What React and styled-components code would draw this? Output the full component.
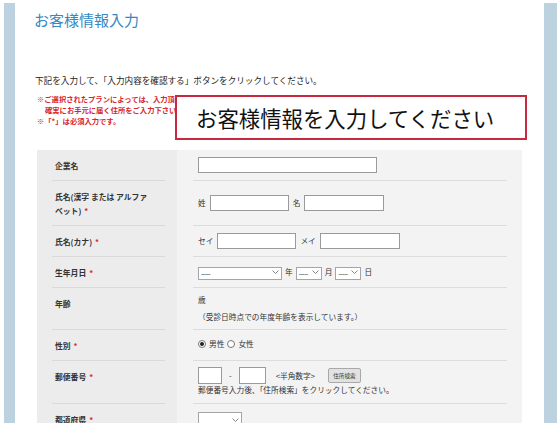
import styled, { createGlobalStyle } from 'styled-components';

const GlobalStyle = createGlobalStyle`
  html, body {
    margin: 0;
    padding: 0;
    background: #fff;
    overflow: hidden;
  }
  body {
    font-family: "Noto Sans CJK JP", "Noto Sans", sans-serif;
    color: #333;
  }
`;

const Page = styled.div`
  position: relative;
  display: flex;
  width: 557px;
  height: 423px;
  overflow: hidden;
`;

const SideBar = styled.div`
  flex: none;
  width: ${props => props.w}px;
  margin-left: ${props => props.ml || 0}px;
  margin-top: 3px;
  background: #bdd2df;
`;

const Main = styled.main`
  flex: none;
  width: 529px;
  display: flex;
  flex-direction: column;
`;

const Title = styled.h1`
  margin: 0;
  padding: 10px 0 0 19px;
  font-size: 15px;
  line-height: 20px;
  font-weight: normal;
  color: #3489c3;
`;

const Divider = styled.div`
  margin: 13px 5px 0 14px;
  height: 3px;
  background: linear-gradient(to right, rgba(220, 220, 220, 0.3), #e9e9e9 8%, #ececec 85%, rgba(236, 236, 236, 0));
  box-shadow: 0 2px 3px rgba(0, 0, 0, 0.03);
`;

const Lead = styled.p`
  margin: 31px 0 0 20px;
  font-size: 8.6px;
  line-height: 12px;
  color: #222;
`;

const Notes = styled.div`
  margin: 8px 0 0 22px;
  font-size: 7.3px;
  line-height: 11px;
  font-weight: bold;
  color: #d8262e;
`;

const NoteLine = styled.div`
  padding-left: ${props => (props.indent ? 8 : 0)}px;
  white-space: nowrap;
`;

const Form = styled.div`
  margin: 23px 0 0 22px;
  width: 485px;
  background: #f3f3f3;
`;

const Row = styled.div`
  display: grid;
  grid-template-columns: 140px 1fr;
`;

const LabelCell = styled.div`
  background: #ececec;
  padding: 0 12px 0 15px;
`;

const LabelInner = styled.div`
  height: 100%;
  box-sizing: border-box;
  padding: 9px 12px 7px 3px;
  border-bottom: 1px solid #d9d9d9;
  font-size: 7.8px;
  line-height: 14px;
  font-weight: bold;
  color: #333;
`;

const LabelText = styled.span`
  display: inline;
`;

const Required = styled.span`
  color: #d8262e;
  margin-left: 3px;
`;

const ValueCell = styled.div`
  padding: 0 15px 0 16px;
`;

const ValueInner = styled.div`
  height: 100%;
  box-sizing: border-box;
  padding: ${props => props.pad || '7px 5px'};
  border-bottom: 1px solid #dcdcdc;
  font-size: 7.7px;
  line-height: ${props => props.lh || 14}px;
  color: #333;
`;

const Line = styled.div`
  display: flex;
  align-items: center;
  gap: ${props => props.gap || 4}px;
  min-height: ${props => props.h || 0}px;
`;

const TextInput = styled.input`
  box-sizing: border-box;
  width: ${props => props.w}px;
  height: ${props => props.h || 16}px;
  margin: 0;
  padding: 0 2px;
  border: 1px solid #9a9a9a;
  background: #fff;
  font-size: 8px;
`;

const SelectWrap = styled.span`
  position: relative;
  display: inline-block;
  width: ${props => props.w}px;
  height: ${props => props.h || 13}px;
`;

const Select = styled.select`
  box-sizing: border-box;
  width: 100%;
  height: 100%;
  margin: 0;
  padding: 0 0 0 2px;
  appearance: none;
  border: 1px solid #a5a5a5;
  border-radius: 0;
  background: #fff;
  font-family: "Liberation Sans", sans-serif;
  font-size: 7px;
  line-height: 11px;
  letter-spacing: -0.5px;
  color: #444;
`;

const Chevron = styled.svg`
  position: absolute;
  right: 3px;
  top: 50%;
  margin-top: -2px;
  width: 7px;
  height: 4px;
  pointer-events: none;
`;

const Radio = styled.span`
  box-sizing: border-box;
  width: 8px;
  height: 8px;
  border-radius: 50%;
  border: 1px solid #777;
  background: #fff;
  display: inline-flex;
  align-items: center;
  justify-content: center;

  &::after {
    content: '';
    width: 4px;
    height: 4px;
    border-radius: 50%;
    background: ${props => (props.checked ? '#222' : 'transparent')};
  }
`;

const Hint = styled.span`
  margin-left: 3px;
`;

const SmallButton = styled.button`
  box-sizing: border-box;
  height: 15px;
  width: 33px;
  margin: 0 0 0 6px;
  padding: 0;
  border: 1px solid #a8a8a8;
  border-radius: 2px;
  background: #e2e2e2;
  font-family: inherit;
  font-size: 5.6px;
  color: #333;
`;

const Overlay = styled.div`
  position: absolute;
  left: 175px;
  top: 95px;
  width: 352px;
  height: 45px;
  box-sizing: border-box;
  border: 2px solid #c72a40;
  background: #fff;
  display: flex;
  align-items: center;
  padding-left: 19px;
  font-size: 21.4px;
  color: #111;
  white-space: nowrap;
`;

function Dropdown({ w, h, value = '-----' }) {
  return (
    <SelectWrap w={w} h={h}>
      <Select defaultValue={value}>
        <option>{value}</option>
      </Select>
      <Chevron viewBox="0 0 7 4">
        <path d="M0.5 0.5 L3.5 3.5 L6.5 0.5" fill="none" stroke="#666" strokeWidth="0.8" />
      </Chevron>
    </SelectWrap>
  );
}

function FormRow({ label, required, children, pad, lh }) {
  return (
    <Row>
      <LabelCell>
        <LabelInner>
          <LabelText>{label}</LabelText>
          {required && <Required>*</Required>}
        </LabelInner>
      </LabelCell>
      <ValueCell>
        <ValueInner pad={pad} lh={lh}>
          {children}
        </ValueInner>
      </ValueCell>
    </Row>
  );
}

export default function App() {
  return (
    <Page>
      <GlobalStyle />
      <SideBar w={11} ml={4} />
      <Main>
        <Title>お客様情報入力</Title>
        <Divider />
        <Lead>下記を入力して、「入力内容を確認する」ボタンをクリックしてください。</Lead>
        <Notes>
          <NoteLine>※ご選択されたプランによっては、入力頂いた</NoteLine>
          <NoteLine indent>確実にお手元に届く住所をご入力下さい。</NoteLine>
          <NoteLine>※「*」は必須入力です。</NoteLine>
        </Notes>
        <Form>
          <FormRow label="企業名">
            <Line>
              <TextInput w={179} />
            </Line>
          </FormRow>
          <FormRow label="氏名(漢字 または アルファベット)" required pad="14px 5px 13px">
            <Line>
              姓 <TextInput w={79} /> 名 <TextInput w={80} />
            </Line>
          </FormRow>
          <FormRow label="氏名(カナ)" required pad="7px 5px">
            <Line>
              セイ <TextInput w={79} /> メイ <TextInput w={80} />
            </Line>
          </FormRow>
          <FormRow label="生年月日" required pad="8px 5px">
            <Line gap={3} h={13}>
              <Dropdown w={84} /> 年 <Dropdown w={26} /> 月 <Dropdown w={26} /> 日
            </Line>
          </FormRow>
          <FormRow label="年齢" pad="3px 5px 4px" lh={17}>
            <div>歳</div>
            <div>（受診日時点での年度年齢を表示しています。）</div>
          </FormRow>
          <FormRow label="性別" required pad="7px 5px 8px">
            <Line gap={3}>
              <Radio checked /> 男性 <Radio /> 女性
            </Line>
          </FormRow>
          <FormRow label="郵便番号" required pad="6px 5px 7px" lh={12}>
            <Line gap={7} h={17}>
              <TextInput w={24} h={17} /> - <TextInput w={27} h={17} />
              <Hint>&lt;半角数字&gt;</Hint>
              <SmallButton>住所検索</SmallButton>
            </Line>
            <div>郵便番号入力後、「住所検索」をクリックしてください。</div>
          </FormRow>
          <FormRow label="都道府県" required pad="8px 5px">
            <Line h={16}>
              <Dropdown w={44} h={16} value="" />
            </Line>
          </FormRow>
        </Form>
      </Main>
      <SideBar w={13} />
      <Overlay>お客様情報を入力してください</Overlay>
    </Page>
  );
}
